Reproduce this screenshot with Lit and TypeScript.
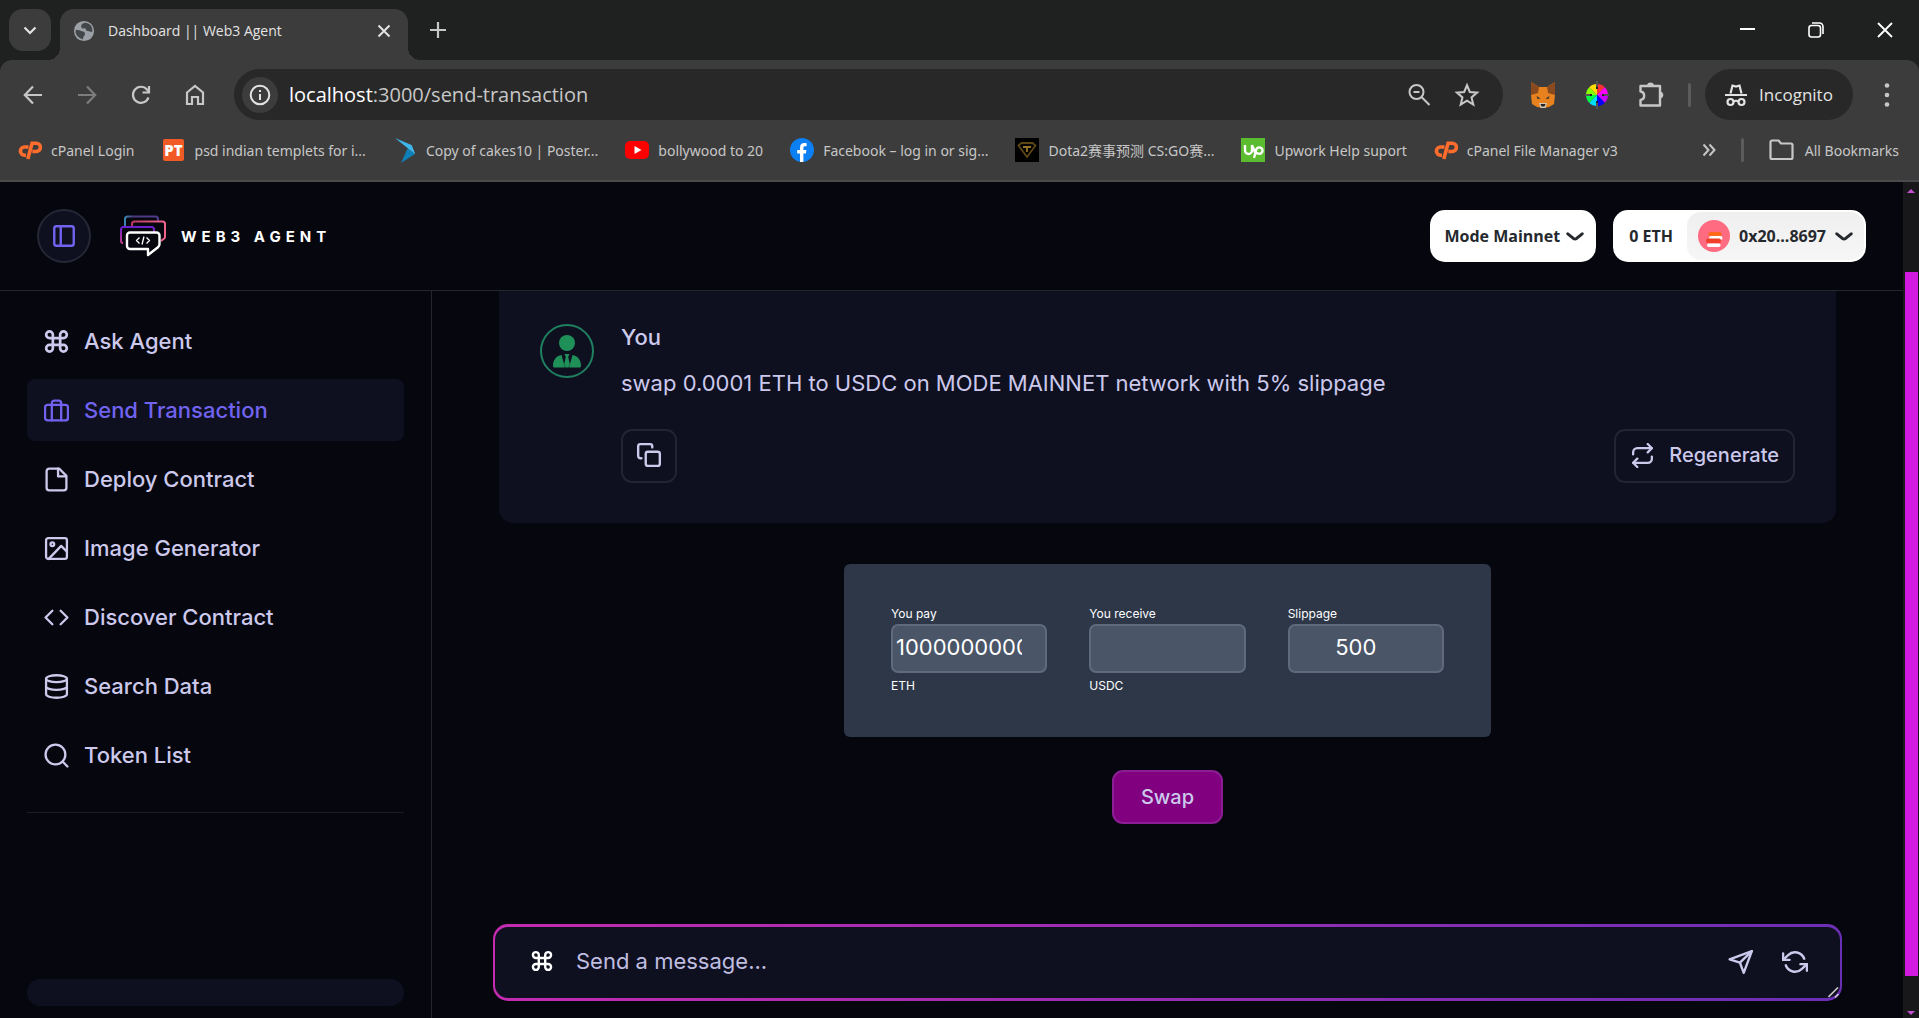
import { LitElement, html, css, svg } from "lit";
import { customElement } from "lit/decorators.js";
import { classMap } from "lit/directives/class-map.js";

const line = (size: number, body: unknown) => html`
  <svg width=${size} height=${size} viewBox="0 0 24 24" fill="none" stroke="currentColor"
    stroke-width="2.200" stroke-linecap="round" stroke-linejoin="round" aria-hidden="true">${body}</svg>`;

const g = {
  command: svg`<path stroke-width="2.600" d="M15.500 5.500v13a3.200 3.200 0 1 0 3.200-3.200H5.300a3.200 3.200 0 1 0 3.200 3.200v-13A3.200 3.200 0 1 0 5.300 8.700h13.400a3.200 3.200 0 1 0-3.200-3.200"/>`,
  briefcase: svg`<rect x="1" y="6.500" width="22" height="15" rx="2.500"/><path d="M7.500 21.500V5a2.500 2.500 0 0 1 2.500-2.500h4A2.500 2.500 0 0 1 16.500 5v16.500"/>`,
  file: svg`<path d="M14.500 1.500H5A2.500 2.500 0 0 0 2.500 4v16A2.500 2.500 0 0 0 5 22.500h14a2.500 2.500 0 0 0 2.500-2.500V8.500z"/><path d="M13.500 1.500v7.500h7.500"/>`,
  image: svg`<rect x="2" y="2" width="20" height="20" rx="2"/><circle cx="8" cy="8" r="1.800"/><path d="m22 15-5.500-5.500L4.500 22"/>`,
  code: svg`<path d="m16 18.500 6.500-6.500L16 5.500M8 5.500 1.500 12 8 18.500"/>`,
  database: svg`<ellipse cx="12" cy="4.500" rx="10" ry="3.300"/><path d="M2 4.500v15c0 1.800 4.500 3.300 10 3.300s10-1.500 10-3.300v-15M2 12c0 1.800 4.500 3.300 10 3.300S22 13.800 22 12"/>`,
  search: svg`<circle cx="11" cy="11" r="9.500"/><path d="m22.500 22.500-4.700-4.700"/>`,
  copy: svg`<rect x="9" y="9" width="13" height="13" rx="2"/><path d="M5 15H4a2 2 0 0 1-2-2V4a2 2 0 0 1 2-2h9a2 2 0 0 1 2 2v1"/>`,
  repeat: svg`<path d="m17 1 4 4-4 4"/><path d="M3 11V9a4 4 0 0 1 4-4h14M7 23l-4-4 4-4"/><path d="M21 13v2a4 4 0 0 1-4 4H3"/>`,
  send: svg`<path d="M22 2 14.500 22l-3.500-9.500L1.500 9.500z"/><path d="M22 2 11 12.500"/>`,
  refresh: svg`<path d="M1 4v6h6M23 20v-6h-6"/><path d="M20.490 9A9 9 0 0 0 5.640 5.640L1 10m22 4-4.640 4.360A9 9 0 0 1 3.510 15"/>`,
  sidebar: svg`<rect x="3" y="3" width="18" height="18" rx="2"/><path d="M9 3v18"/>`,
};

const cpanel = html`<svg width="24" height="20" viewBox="0 0 24 20" fill="none" stroke="#ff6c2c" stroke-width="3.600" aria-hidden="true">
  <path d="M10.500 7H6.500a4 4 0 0 0 0 8.200h1.500"/><path d="m9.800 19 4.300-15.800h4.200a3.900 3.900 0 0 1 0 8.300h-4" /></svg>`;

const marks = [
  { text: "cPanel Login", icon: cpanel },
  { text: "psd indian templets for i...", icon: html`<svg width="21" height="22" viewBox="0 0 21 22" aria-hidden="true"><rect width="21" height="22" rx="2" fill="#f15a24"/><text x="10.500" y="16.500" text-anchor="middle" font-size="15" font-weight="800" font-family="Open Sans, sans-serif" fill="#fff">PT</text></svg>` },
  { text: "Copy of cakes10 | Poster...", icon: html`<svg width="20" height="25" viewBox="0 0 20 25" aria-hidden="true"><path d="M0 0 16.500 7l3.500 9z" fill="#3fb6e8"/><path d="M16.500 7 20 16l-7-5.500z" fill="#3fb6e8"/><path d="M20 16 6 25l6.500-14.500z" fill="#0f7fb8"/></svg>` },
  { text: "bollywood to 20", icon: html`<svg width="24" height="18" viewBox="0 0 24 18" aria-hidden="true"><rect width="24" height="18" rx="5" fill="#f00"/><path d="m9.500 5 7 4-7 4z" fill="#fff"/></svg>` },
  { text: "Facebook – log in or sig...", icon: html`<svg width="24" height="24" viewBox="0 0 24 24" aria-hidden="true"><circle cx="12" cy="12" r="12" fill="#0c7ff2"/><path d="M10 24v-8.500H7.200V12H10V9.700C10 6.400 11.800 5 14.300 5c1 0 1.900.1 2.300.2v3h-1.500c-1.300 0-1.700.7-1.700 1.700V12h3l-.5 3.500h-2.500V24z" fill="#fff"/></svg>` },
  { text: "Dota2赛事预测 CS:GO赛...", icon: html`<svg width="24" height="24" viewBox="0 0 24 24" aria-hidden="true"><rect width="24" height="24" fill="#000"/><path d="M3.500 7.500 6.500 5h11l3 2.500L12 19z" fill="none" stroke="#5c4614" stroke-width="1.800"/><path d="M8 9h8M12 9v5" stroke="#957326" stroke-width="1.800"/></svg>` },
  { text: "Upwork Help suport", icon: html`<svg width="24" height="24" viewBox="0 0 24 24" aria-hidden="true"><rect width="24" height="24" fill="#5bbc2f"/><path d="M4 7v5.500a3.500 3.500 0 0 0 7 0V7c1 4 3 6.500 5 9M13 20l2.300-8.500A3.200 3.200 0 1 1 17 15.500c-1.500 0-3-1-4-2.500" fill="none" stroke="#fff" stroke-width="2.400"/></svg>` },
  { text: "cPanel File Manager v3", icon: cpanel },
];

@customElement("browser-chrome")
class BrowserChrome extends LitElement {
  static styles = css`
    :host { display: block; font-family: "Open Sans", "Noto Sans CJK SC", sans-serif; color: #e3e3e3; background: #1f2020; }
    * { box-sizing: border-box; }
    button { font: inherit; color: inherit; background: none; border: 0; padding: 0; display: flex; align-items: center; justify-content: center; flex: none; }
    svg { flex: none; display: block; }
    .strip { height: 60px; display: flex; align-items: flex-end; padding-left: 9px; }
    .list { width: 42px; height: 42px; border-radius: 14px; background: #3c3c3c; align-self: center; }
    .tab { margin-left: 9px; width: 348px; height: 51px; background: #3c3c3c; border-radius: 14px 14px 0 0; display: flex; align-items: center; padding: 0 13px 8px; font-size: 14px; position: relative; }
    .tab::before, .tab::after { content: ""; position: absolute; bottom: 0; width: 12px; height: 12px; }
    .tab::before { left: -12px; background: radial-gradient(circle at 0 0, transparent 12px, #3c3c3c 12px); }
    .tab::after { right: -12px; background: radial-gradient(circle at 100% 0, transparent 12px, #3c3c3c 12px); }
    .title { flex: 1; margin-left: 13px; white-space: nowrap; }
    .plus { width: 32px; height: 51px; padding-bottom: 9px; margin-left: 14px; }
    .window { margin-left: auto; display: flex; height: 60px; }
    .window button { width: 69px; }
    .bar { height: 70px; background: #3c3c3c; border-radius: 12px 12px 0 0; display: flex; align-items: center; padding: 0 20px 1px 19px; color: #c7c7c7; }
    .navs { display: flex; gap: 26px; }
    .navs button { width: 28px; height: 28px; }
    .navs .dim { color: #7c7c7c; }
    .omni { flex: 1; min-width: 0; height: 51px; border-radius: 26px; background: #282828; margin-left: 25px; display: flex; align-items: center; padding: 0 23px 0 8px; }
    .omni .info { width: 36px; height: 36px; border-radius: 50%; background: #3c3c3c; color: #e3e3e3; }
    .url { flex: 1; min-width: 0; margin-left: 11px; padding-bottom: 1px; font-size: 20px; color: #c7c7c7; white-space: nowrap; }
    .url b { font-weight: 400; color: #fff; }
    .omni .star { margin-left: 23px; }
    .ext { display: flex; gap: 29px; margin: 0 24px 0 27px; align-items: center; }
    .sep { width: 3px; height: 24px; background: #5c5c5c; border-radius: 2px; }
    .bar .incog { margin-left: 14px; height: 51px; width: 148px; border-radius: 26px; background: #282828; color: #e3e3e3; font-size: 17px; gap: 12px; }
    .more { margin-left: 22px; width: 24px; }
    .marks { height: 52px; background: #3c3c3c; border-bottom: 2px solid #4a4a4d; display: flex; align-items: center; padding: 0 20px 10px 18px; font-family: "Noto Sans", "Noto Sans CJK SC", sans-serif; font-size: 14px; color: #c7c7c7; gap: 27px; white-space: nowrap; }
    .mark { display: flex; align-items: center; gap: 9px; color: inherit; text-decoration: none; }
    .icon { width: 24px; display: flex; justify-content: center; }
    .tail { margin-left: auto; display: flex; align-items: center; gap: 25px; }
    .tail .all { gap: 11px; }
  `;

  render() {
    return html`
      <div class="strip">
        <button class="list" aria-label="Search tabs"><svg width="14" height="14" viewBox="0 0 14 14" fill="none" stroke="currentColor" stroke-width="2.200"><path d="m1.500 4.500 5.500 5.500 5.500-5.500"/></svg></button>
        <div class="tab">
          <svg width="22" height="24" viewBox="0 0 24 24" aria-hidden="true"><circle cx="12" cy="12" r="11" fill="#9aa0a6"/><path d="M3 11c2 0 4 0 6 1s4 0 4 3-2 2-2 6C5 20 2 15 3 11zM13 3c-2 1-4 1-4 4s3 2 4 2 1 3 3 3 3 1 5 1C22 7 18 3 13 3z" fill="#44474a"/></svg>
          <span class="title">Dashboard || Web3 Agent</span>
          <button aria-label="Close tab"><svg width="22" height="22" viewBox="0 0 22 22" stroke="currentColor" stroke-width="2"><path d="m5.500 5.500 11 11m0-11-11 11"/></svg></button>
        </div>
        <button class="plus" aria-label="New tab"><svg width="18" height="18" viewBox="0 0 18 18" stroke="#c7c7c7" stroke-width="2.200"><path d="M9 1v16M1 9h16"/></svg></button>
        <div class="window">
          <button aria-label="Minimize"><svg width="16" height="16" viewBox="0 0 16 16" stroke="#fff" stroke-width="2"><path d="M1 7h15"/></svg></button>
          <button aria-label="Restore"><svg width="16" height="16" viewBox="0 0 16 16" fill="none" stroke="#fff" stroke-width="1.600"><rect x="1" y="3.500" width="11.500" height="11.500" rx="2.500"/><path d="M4 1h7.500a3.500 3.500 0 0 1 3.500 3.500V12"/></svg></button>
          <button aria-label="Close"><svg width="16" height="16" viewBox="0 0 16 16" stroke="#fff" stroke-width="1.800"><path d="m1 1 14 14M15 1 1 15"/></svg></button>
        </div>
      </div>
      <div class="bar">
        <div class="navs">
          <button aria-label="Back"><svg width="20" height="20" viewBox="0 0 20 20" fill="none" stroke="currentColor" stroke-width="2.200"><path d="M19 10H2.500M10 1.500 1.800 10l8.200 8.500"/></svg></button>
          <button class="dim" aria-label="Forward"><svg width="20" height="20" viewBox="0 0 20 20" fill="none" stroke="currentColor" stroke-width="2.200"><path d="M1 10h16.500M10 1.500l8.200 8.500-8.200 8.500"/></svg></button>
          <button aria-label="Reload"><svg width="20" height="20" viewBox="0 0 20 20" fill="none" stroke="currentColor" stroke-width="2.200"><path d="M17.500 12.500A8 8 0 1 1 16 4.500L18 7"/><path d="M18 1v6.500h-6.500"/></svg></button>
          <button aria-label="Home"><svg width="20" height="22" viewBox="0 0 20 22" fill="none" stroke="currentColor" stroke-width="2.200"><path d="M2 8.500 10 2l8 6.500V20h-5v-7H7v7H2z"/></svg></button>
        </div>
        <div class="omni">
          <button class="info" aria-label="Site information"><svg width="22" height="22" viewBox="0 0 22 22" fill="none" stroke="currentColor" stroke-width="2"><circle cx="11" cy="11" r="9.300"/><path d="M11 10v6M11 6v2"/></svg></button>
          <div class="url"><b>localhost</b>:3000/send-transaction</div>
          <button aria-label="Zoom"><svg width="24" height="24" viewBox="0 0 24 24" fill="none" stroke="currentColor" stroke-width="2"><circle cx="9.500" cy="9" r="7"/><path d="m14.500 14 8 8M6.500 9h6"/></svg></button>
          <button class="star" aria-label="Bookmark this tab"><svg width="26" height="26" viewBox="0 0 24 24" fill="none" stroke="currentColor" stroke-width="1.900"><path d="m12 3 2.600 6.200 6.700.6-5.100 4.400 1.600 6.600L12 17.300l-5.800 3.500 1.600-6.600-5.100-4.400 6.700-.6z"/></svg></button>
        </div>
        <div class="ext">
          <button aria-label="MetaMask"><svg width="26" height="28" viewBox="0 0 26 28"><path d="M1 1l8 5h8l8-5v13l-1 9-5 3-6 1-6-1-5-3-1-9z" fill="#e8821e"/><path d="M1 1l8 5-1 6-7 2zM25 1l-8 5 1 6 7 2z" fill="#8a4a20"/><path d="m6.500 15 4 2.500-3 .5zM19.500 15l-4 2.500 3 .5z" fill="#333"/><path d="M9 22h8l-1.500 5h-5z" fill="#d8c8b8"/><path d="M10.500 23h5l-1 2.500h-3z" fill="#222"/></svg></button>
          <button aria-label="Color picker"><svg width="24" height="28" viewBox="0 0 24 28">
            ${[["#f33", 0], ["#f0f", 45], ["#c0f", 90], ["#00f", 135], ["#0df", 180], ["#0f4", 225], ["#8f0", 270], ["#fd0", 315]].map(([c, a]) => svg`<path d="M12 14V3A11 11 0 0 1 19.780 6.220z" fill=${c} transform="rotate(${a} 12 14)"/>`)}
            <path d="M12 0v8M12 20v8M0 14h7M17 14h7" stroke="#222" stroke-width="2"/><path d="M12 0v6M12 22v6M0 14h5M19 14h5" stroke="#ccc" stroke-width=".6"/></svg></button>
          <button aria-label="Extensions"><svg width="26" height="28" viewBox="0 0 26 28" fill="none" stroke="currentColor" stroke-width="2.400" stroke-linejoin="round"><path d="M2.500 5H22v19.500H2.500V19a4.300 4.300 0 0 0 0-8.500z"/><path d="M10 4.500a2.700 2.700 0 0 1 5 0zM22.500 11.500a2.700 2.700 0 0 1 0 5z" fill="currentColor"/></svg></button>
        </div>
        <span class="sep"></span>
        <button class="incog"><svg width="22" height="24" viewBox="0 0 22 24" fill="none" stroke="currentColor" stroke-width="2.200"><path d="M5.500 10.500 7.500 2.500l3.500 1 3.500-1 2 8M0 12h22"/><circle cx="5.500" cy="19" r="3"/><circle cx="16.500" cy="19" r="3"/><path d="M8.500 18.500q2.500-1.500 5 0"/></svg>Incognito</button>
        <button class="more" aria-label="Menu"><svg width="6" height="24" viewBox="0 0 6 24" fill="currentColor"><circle cx="3" cy="2.500" r="2.300"/><circle cx="3" cy="12" r="2.300"/><circle cx="3" cy="21.500" r="2.300"/></svg></button>
      </div>
      <div class="marks">
        ${marks.map((m) => html`<a class="mark" href="#"><span class="icon">${m.icon}</span><span>${m.text}</span></a>`)}
        <div class="tail">
          <button aria-label="More bookmarks"><svg width="14" height="14" viewBox="0 0 14 14" fill="none" stroke="currentColor" stroke-width="2"><path d="m1.500 1.500 5 5.500-5 5.500M7.500 1.500l5 5.500-5 5.500"/></svg></button>
          <span class="sep"></span>
          <button class="all"><svg width="25" height="22" viewBox="0 0 25 22" fill="none" stroke="currentColor" stroke-width="2.200" stroke-linejoin="round"><path d="M1.500 3A1.500 1.500 0 0 1 3 1.500h6.500l2.500 3h10A1.500 1.500 0 0 1 23.500 6v12.500a1.500 1.500 0 0 1-1.500 1.500H3a1.500 1.500 0 0 1-1.500-1.500z"/></svg>All Bookmarks</button>
        </div>
      </div>`;
  }
}

const pages = [
  { name: "Ask Agent", icon: g.command, active: false },
  { name: "Send Transaction", icon: g.briefcase, active: true },
  { name: "Deploy Contract", icon: g.file, active: false },
  { name: "Image Generator", icon: g.image, active: false },
  { name: "Discover Contract", icon: g.code, active: false },
  { name: "Search Data", icon: g.database, active: false },
  { name: "Token List", icon: g.search, active: false },
];

@customElement("agent-header")
class AgentHeader extends LitElement {
  static styles = css`
    :host { display: flex; align-items: center; height: 109px; border-bottom: 1px solid #25252d; padding: 0 37px; box-sizing: border-box; }
    * { box-sizing: border-box; }
    button { display: flex; align-items: center; font: 700 16px "Open Sans", sans-serif; color: #25292e; border: 0; padding: 0; }
    svg { display: block; flex: none; }
    .toggle { width: 54px; height: 54px; border-radius: 50%; border: 2px solid #262735; background: #0e1020; color: #7163f0; justify-content: center; }
    .brand { display: flex; align-items: center; gap: 15px; margin-left: 29px; color: #fff; text-decoration: none; font: 700 15px Inter, sans-serif; letter-spacing: 5px; }
    .wallet { margin-left: auto; display: flex; gap: 17px; }
    .pill { height: 52px; border-radius: 15px; background: #fff; }
    .chain { padding: 0 12px 0 14px; gap: 6px; }
    .balance { padding: 0 2px 0 16px; gap: 14px; }
    .account { height: 48px; display: flex; align-items: center; gap: 9px; padding: 0 11px; border-radius: 14px; background: linear-gradient(#efefef, #f6f6f6); }
  `;

  render() {
    const arrow = html`<svg width="18" height="9" viewBox="0 0 18 9" fill="none" stroke="#25292e" stroke-width="3" stroke-linecap="round" stroke-linejoin="round" aria-hidden="true"><path d="m1.800 1.800 5.600 4.600q1.600 1 3.200 0l5.600-4.600"/></svg>`;
    return html`
      <button class="toggle" aria-label="Toggle sidebar">${line(26, g.sidebar)}</button>
      <a class="brand" href="#">
        <svg width="46" height="42" viewBox="0 0 46 42" fill="none" stroke-width="2" stroke-linejoin="round" aria-hidden="true">
          <defs>
            <linearGradient id="a"><stop offset="0" stop-color="#3a86b0"/><stop offset=".25" stop-color="#4b3a80"/><stop offset="1" stop-color="#513a8a"/></linearGradient>
            <linearGradient id="b"><stop offset="0" stop-color="#b83a5e"/><stop offset="1" stop-color="#f0648e"/></linearGradient>
            <linearGradient id="c" x2="0" y2="1"><stop offset="0" stop-color="#6a1fd0"/><stop offset="1" stop-color="#c0408a"/></linearGradient>
          </defs>
          <path d="M5 12V4A2.500 2.500 0 0 1 7.500 1.500h28A2.500 2.500 0 0 1 38 4V6.500" stroke="url(#a)"/>
          <path d="M12 12V9A2.500 2.500 0 0 1 14.500 6.500h28A2.500 2.500 0 0 1 45 9v13q0 1.500-1.500 2L41 26" stroke="url(#b)"/>
          <path d="M3 28q-2 0-2-2.500v-11A2.500 2.500 0 0 1 3.500 12h28a2.500 2.500 0 0 1 2.500 2.500V17" stroke="url(#c)"/>
          <path d="M10 17.500h26.500A3 3 0 0 1 39.500 20.500V29q0 2-1.500 3.200L28 40v-6H10a3 3 0 0 1-3-3v-10.500A3 3 0 0 1 10 17.500z" stroke="#fff" stroke-width="2.400"/>
          <path d="m19.500 22.500-3 3 3 3m7-6 3 3-3 3m-2.500-7-2 8" stroke="#fff" stroke-width="1.300"/>
        </svg>
        <span>WEB3 AGENT</span>
      </a>
      <div class="wallet">
        <button class="pill chain">Mode Mainnet ${arrow}</button>
        <button class="pill balance">0 ETH
          <span class="account">
            <svg width="32" height="32" viewBox="0 0 32 32" aria-hidden="true"><circle cx="16" cy="16" r="16" fill="#ff6b81"/><rect x="10.500" y="12" width="13" height="4.500" rx="2" fill="#ff6a1a"/><rect x="11" y="16" width="13.500" height="4" rx="2" fill="#fff"/><rect x="8" y="18.500" width="15" height="4.500" rx="2" fill="#f0402a"/><rect x="9" y="23.500" width="13.500" height="3.500" rx="1.700" fill="#fff"/></svg>
            0x20...8697 ${arrow}
          </span>
        </button>
      </div>`;
  }
}

@customElement("agent-sidebar")
class AgentSidebar extends LitElement {
  static styles = css`
    :host { display: flex; flex-direction: column; box-sizing: border-box; padding: 19px 27px 12px; border-right: 1px solid #25252d; font: 500 22px/30px Inter, sans-serif; }
    nav { display: flex; flex-direction: column; gap: 7px; }
    a { display: flex; align-items: center; gap: 15px; height: 62px; box-sizing: border-box; padding: 0 17px; border-radius: 8px; color: #ccc9ec; text-decoration: none; }
    .active { background: #0e1020; color: #7163f0; }
    svg { flex: none; }
    span { padding-bottom: 1px; }
    hr { width: 100%; margin: 26px 0 0; border: 0; border-top: 1px solid #1c1c25; }
    .foot { margin-top: auto; height: 27px; border-radius: 14px; background: #0e1020; }
  `;

  render() {
    return html`
      <nav>${pages.map((p) => html`<a href="#" class=${classMap({ active: p.active })}>${line(25, p.icon)}<span>${p.name}</span></a>`)}</nav>
      <hr />
      <div class="foot"></div>`;
  }
}

@customElement("agent-chat")
class AgentChat extends LitElement {
  static styles = css`
    :host { display: flex; flex-direction: column; box-sizing: border-box; min-width: 0; padding: 0 61px 17px; font: 22px/30px Inter, sans-serif; color: #ccc9ec; }
    * { box-sizing: border-box; }
    svg { display: block; flex: none; }
    button, input, textarea { font: inherit; color: inherit; }
    button { background: none; padding: 0; border: 0; display: flex; align-items: center; justify-content: center; }
    .message { margin: 0 6px; display: flex; gap: 27px; padding: 33px 41px 40px; background: #0e1020; border-radius: 0 0 14px 14px; }
    .face { width: 54px; height: 54px; border: 2px solid #1f8060; border-radius: 50%; display: flex; align-items: center; justify-content: center; }
    .body { flex: 1; min-width: 0; }
    h2 { margin: 0; font: 500 22px/26px Inter, sans-serif; }
    p { margin: 18px 0 31px; }
    .actions { display: flex; justify-content: space-between; }
    .box { height: 54px; border: 2px solid #232432; border-radius: 11px; min-width: 56px; padding-bottom: 2px; }
    .regen, .swap { font-size: 20px; font-weight: 500; }
    .regen { padding: 0 14px 2px; gap: 14px; }
    .quote { align-self: center; margin-top: 41px; width: 647px; max-width: 100%; height: 173px; background: #2d3748; border-radius: 6px; padding: 40px 47px; display: grid; grid-template-columns: repeat(3, 1fr); column-gap: 42px; color: #fff; }
    label, .unit { display: block; font-size: 12px; line-height: 20px; }
    .quote input { display: block; width: 100%; height: 49px; background: #4a5568; border: 2px solid #5f6b7d; border-radius: 7px; padding: 0 23px 3px 3px; text-align: center; color: #fff; }
    .unit { margin-top: 3px; }
    .swap { align-self: center; margin-top: 33px; width: 111px; height: 54px; background: #800080; border: 2px solid #8c1d94; border-radius: 11px; }
    .composer { margin-top: auto; height: 77px; border-radius: 15px; padding: 3px 2px; background: linear-gradient(90deg, #c42bb0, #6b2fb5); position: relative; display: flex; }
    textarea { flex: 1; min-width: 0; height: 71px; border: 0; border-radius: 13px; outline: 0; background: #0e1020; padding: 19px 160px 20px 81px; display: block; resize: none; overflow: hidden; }
    textarea::placeholder { color: #c0bee0; opacity: 1; }
    .cmd { position: absolute; left: 38px; top: 26px; color: #fff; }
    .tools { position: absolute; right: 34px; top: 25px; display: flex; gap: 28px; }
    .grip { position: absolute; right: 3px; bottom: 3px; }
  `;

  render() {
    return html`
      <section class="message">
        <div class="face"><svg width="28" height="33" viewBox="0 0 28 33" fill="#1f9058" aria-hidden="true"><circle cx="14" cy="8" r="8"/><path d="M0 31c0-6 3-10 8.500-11l3.500 12.500H1.500Q0 32.500 0 31zM28 31c0-6-3-10-8.500-11L16 32.500h10.500q1.500 0 1.500-1.500zM11.500 19h5l-1.300 3 1.600 7-1.300 3.500h-3L11.200 29l1.600-7z"/></svg></div>
        <div class="body">
          <h2>You</h2>
          <p>swap 0.0001 ETH to USDC on MODE MAINNET network with 5% slippage</p>
          <div class="actions">
            <button class="box" aria-label="Copy">${line(26, g.copy)}</button>
            <button class="box regen">${line(25, g.repeat)}Regenerate</button>
          </div>
        </div>
      </section>
      <section class="quote">
        <div><label for="pay">You pay</label><input id="pay" .value=${"100000000000000"} /><span class="unit">ETH</span></div>
        <div><label for="receive">You receive</label><input id="receive" /><span class="unit">USDC</span></div>
        <div><label for="slippage">Slippage</label><input id="slippage" .value=${"500"} /></div>
      </section>
      <button class="swap">Swap</button>
      <div class="composer">
        <textarea rows="1" placeholder="Send a message..." aria-label="Send a message"></textarea>
        <span class="cmd">${line(22, g.command)}</span>
        <div class="tools">
          <button aria-label="Send">${line(26, g.send)}</button>
          <button aria-label="Reset">${line(26, g.refresh)}</button>
        </div>
        <svg class="grip" width="11" height="11" viewBox="0 0 11 11" stroke="#c8c8c8" stroke-width="1.600" aria-hidden="true"><path d="M.5 10 10 .5M7 10.500 10.500 7"/></svg>
      </div>`;
  }
}

@customElement("app-root")
class AppRoot extends LitElement {
  static styles = css`
    :host { display: flex; flex-direction: column; min-height: 100vh; background: #05060e; }
    .view { flex: 1; display: flex; }
    .page { flex: 1; min-width: 0; display: flex; flex-direction: column; }
    .main { flex: 1; display: grid; grid-template-columns: 432px minmax(0, 1fr); }
    .scroll { width: 16px; background: #18181b; display: flex; flex-direction: column; align-items: center; padding: 7px 0 3px; box-sizing: border-box; }
    .thumb { width: 13px; flex: 1; margin: 79px 0 35px; background: #d21ae0; }
    .scroll svg { display: block; }
  `;

  render() {
    return html`
      <browser-chrome></browser-chrome>
      <div class="view">
        <div class="page">
          <agent-header></agent-header>
          <div class="main"><agent-sidebar></agent-sidebar><agent-chat></agent-chat></div>
        </div>
        <div class="scroll">
          <svg width="8" height="4" viewBox="0 0 8 4" fill="#c44fd0"><path d="M0 4 4 0l4 4z"/></svg>
          <div class="thumb"></div>
          <svg width="8" height="4" viewBox="0 0 8 4" fill="#c44fd0"><path d="M0 0h8L4 4z"/></svg>
        </div>
      </div>`;
  }
}
